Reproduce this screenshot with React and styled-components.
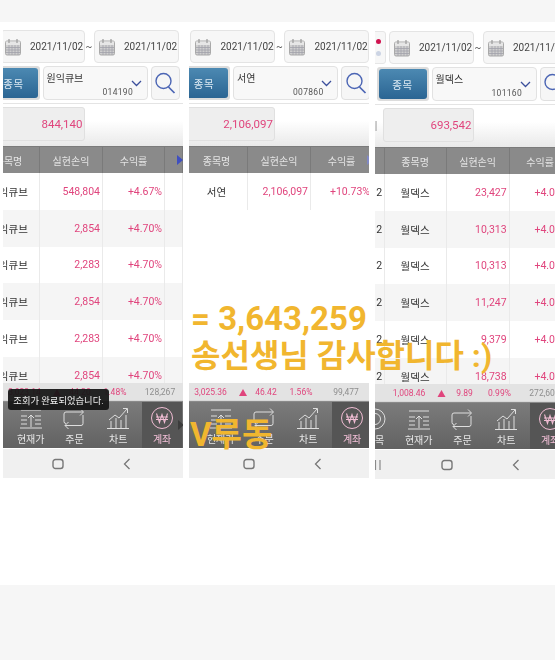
import React from "react";
import styled, { createGlobalStyle } from "styled-components";

const FONT = `"Roboto", "Noto Sans CJK KR", sans-serif`;
const GOLD = "#f1b62f";
const PINK = "#e0457d";

const Global = createGlobalStyle`
  html, body { margin: 0; padding: 0; background: #f6f6f6; }
  * { box-sizing: border-box; }
  body { font-family: ${FONT}; width: 555px; height: 660px; overflow: hidden; }
`;

const Page = styled.div`
  padding-top: 22px;
  height: 660px;
`;
const Sheet = styled.section`
  position: relative;
  height: 563px;
  background: #fff;
  display: flex;
  gap: 6px;
  padding-left: 3px;
  overflow: hidden;
`;
const Phone = styled.article`
  width: 180px;
  height: 456px;
  flex: none;
  margin-top: ${(p) => p.$drop}px;
  overflow: hidden;
  position: relative;
  display: flex;
  flex-direction: column;
  background: #fff;
  filter: blur(0.5px);
`;
const DateRow = styled.div`
  display: flex;
  align-items: center;
  height: 33px;
  margin: 8px 0 3px ${(p) => p.$offset - 32}px;
  flex: none;
`;
const DotCard = styled.div`
  width: 30px;
  height: 33px;
  margin-right: 3px;
  flex: none;
  border: 1px solid #e6e6e6;
  border-radius: 3px;
  background: #f7f7f7;
  display: flex;
  flex-direction: column;
  align-items: flex-end;
  justify-content: center;
  gap: 7px;
  padding-right: 4px;
`;
const Dot = styled.span`
  width: 5px;
  height: 5px;
  border-radius: 50%;
  background: ${(p) => p.$color};
`;
const DateBox = styled.div`
  width: 85px;
  height: 33px;
  flex: none;
  border: 1px solid #e4e4e4;
  border-radius: 4px;
  background: #f7f7f7;
  display: flex;
  align-items: center;
  padding-left: 3px;
  gap: 8.5px;
  font-size: 10px;
  color: #444;
  white-space: nowrap;
`;
const Tilde = styled.span`
  width: 9px;
  flex: none;
  text-align: center;
  font-size: 10px;
  color: #555;
`;
const StockRow = styled.div`
  display: flex;
  align-items: center;
  height: 34px;
  gap: 3px;
  margin-left: ${(p) => p.$offset - 11}px;
  flex: none;
`;
const StockFrame = styled.div`
  width: 52px;
  height: 34px;
  flex: none;
  background: #dcdcdc;
  border-radius: 3px;
  padding: 2px;
`;
const StockBtn = styled.div`
  height: 30px;
  border-radius: 3px;
  background: linear-gradient(#4c89b2, #2b6593);
  color: #dbe8f2;
  font-size: 10.5px;
  display: flex;
  align-items: center;
  justify-content: center;
  letter-spacing: 0.5px;
`;
const StockInput = styled.div`
  width: 105px;
  height: 34px;
  flex: none;
  position: relative;
  border: 1px solid #e2e2e2;
  border-radius: 4px;
  background: #f8f8f8;
  color: #333;
  font-size: 10px;
  padding: 3px 0 0 3px;
`;
const StockCode = styled.span`
  position: absolute;
  left: 59px;
  bottom: 2px;
  font-size: 8.5px;
  letter-spacing: 0.3px;
  color: #555;
`;
const Chevron = styled.svg`
  position: absolute;
  right: 5px;
  top: 13px;
`;
const SearchBtn = styled.div`
  width: 29px;
  height: 34px;
  flex: none;
  border: 1px solid #e0e0e0;
  border-radius: 4px;
  background: #f6f6f6;
  display: flex;
  align-items: center;
  justify-content: center;
`;
const SummaryBand = styled.div`
  height: 43px;
  flex: none;
  margin-top: 3px;
  border-top: 1px solid #e4e4e4;
  background: linear-gradient(#fff 40%, #e9e9e9);
  padding-top: 3px;
`;
const SummaryInner = styled.div`
  display: flex;
  align-items: center;
  margin-left: ${(p) => p.$offset - 65}px;
`;
const SummaryLabel = styled.span`
  width: 60px;
  flex: none;
  text-align: right;
  padding-right: 5px;
  font-size: 10px;
  color: #888;
`;
const SummaryBox = styled.div`
  width: 91px;
  height: 34px;
  flex: none;
  border: 1px solid #e0e0e0;
  border-radius: 3px;
  background: #eeeeee;
  color: ${PINK};
  font-size: 11.5px;
  display: flex;
  align-items: center;
  justify-content: flex-end;
  padding-right: 1px;
`;
const HeaderWrap = styled.div`
  position: relative;
  height: 27px;
  flex: none;
  overflow: hidden;
  background: #8a8a8a;
  border-top: 1px solid #7b7b7b;
`;
const Grid = styled.div`
  display: flex;
  height: 100%;
  margin-left: ${(p) => p.$scroll}px;
`;
const HeadCell = styled.div`
  width: ${(p) => p.$w}px;
  flex: none;
  border-right: 1px solid #7a7a7a;
  color: #e4e4e4;
  font-size: 10px;
  display: flex;
  align-items: center;
  justify-content: center;
  white-space: nowrap;
`;
const MoreArrow = styled.svg`
  position: absolute;
  top: 8px;
  left: ${(p) => p.$x}px;
`;
const TableBody = styled.div`
  height: 210px;
  flex: none;
  overflow: hidden;
`;
const Row = styled.div`
  height: 36.8px;
  background: ${(p) => (p.$shade ? "#f5f5f5" : "#fff")};
`;
const Cell = styled.div`
  width: ${(p) => p.$w}px;
  flex: none;
  height: 100%;
  border-right: 1px solid #eaeaea;
  font-size: 10.5px;
  color: ${(p) => (p.$pink ? PINK : "#333")};
  display: flex;
  align-items: center;
  justify-content: ${(p) => (p.$right ? "flex-end" : "center")};
  padding-right: ${(p) => (p.$right ? 2 : 0)}px;
  white-space: nowrap;
  overflow: hidden;
`;
const Status = styled.div`
  height: 18px;
  flex: none;
  background: #e3e3e3;
  display: flex;
  align-items: center;
  padding-left: ${(p) => p.$pad}px;
  font-size: 8.5px;
  color: ${PINK};
  border-bottom: 1px solid #d8d8d8;
  overflow: hidden;
`;
const StatusCol = styled.span`
  width: ${(p) => p.$w}px;
  flex: none;
  text-align: center;
  white-space: nowrap;
  color: ${(p) => (p.$grey ? "#8e8e8e" : PINK)};
`;
const Tabs = styled.nav`
  height: 47px;
  flex: none;
  background: linear-gradient(#7b7b7b, #626262);
  overflow: hidden;
  position: relative;
  border-top: 1px solid #8a8a8a;
`;
const TabStrip = styled.div`
  display: flex;
  height: 100%;
  margin-left: ${(p) => p.$left}px;
`;
const Tab = styled.div`
  width: 43.8px;
  flex: none;
  display: flex;
  flex-direction: column;
  align-items: center;
  justify-content: flex-end;
  gap: 1px;
  padding: 2px 0 2px;
  font-size: 10px;
  color: ${(p) => (p.$active ? "#f3c0d8" : "#e6e6e6")};
  background: ${(p) => (p.$active ? "linear-gradient(to right, transparent 2px, #555 2px, #555 42px, transparent 42px)" : "none")};
  white-space: nowrap;
`;
const TabArrow = styled.svg`
  position: absolute;
  left: 175px;
  top: 18px;
`;
const NavBar = styled.div`
  height: 30px;
  flex: none;
  margin-top: 1px;
  background: #f0f0f0;
  overflow: hidden;
`;
const NavStrip = styled.div`
  display: flex;
  height: 100%;
  margin-left: ${(p) => p.$offset - 44}px;
`;
const NavItem = styled.div`
  width: 69px;
  flex: none;
  display: flex;
  align-items: center;
  justify-content: center;
`;
const Toast = styled.div`
  position: absolute;
  left: 5px;
  top: 367px;
  width: 101px;
  height: 21px;
  background: rgba(20, 20, 20, 0.93);
  border-radius: 3px;
  color: #eee;
  font-size: 9.3px;
  display: flex;
  align-items: center;
  justify-content: center;
  white-space: nowrap;
`;
const Caption = styled.div`
  position: absolute;
  left: ${(p) => p.$x}px;
  top: ${(p) => p.$y}px;
  color: ${GOLD};
  font-size: ${(p) => p.$size}px;
  font-weight: 700;
  line-height: 1;
  white-space: nowrap;
`;

const CalendarIcon = () => (
  <svg width="18" height="18" viewBox="0 0 18 18">
    <rect x="1.5" y="3" width="15" height="14" rx="1.5" fill="#cfcfcf" stroke="#a9a9a9" />
    <rect x="2" y="3.5" width="14" height="3.5" fill="#e6e6e6" />
    <path d="M5 1v4M13 1v4" stroke="#9a9a9a" strokeWidth="1.2" />
    <path d="M2 9.5h14M2 12h14M2 14.5h14M5 7v10M8 7v10M11 7v10M14 7v10" stroke="#a2a2ab" strokeWidth="0.8" />
  </svg>
);
const SearchIcon = () => (
  <svg width="22" height="24" viewBox="0 0 22 24" fill="none" stroke="#4b65b4" strokeWidth="1.4">
    <circle cx="9.5" cy="10" r="7.5" />
    <path d="M14.5 16l6 6" strokeWidth="1.7" />
  </svg>
);
const stroke = { fill: "none", stroke: "#dedede", strokeWidth: 1 };
const TargetIcon = () => (
  <svg width="24" height="24" viewBox="0 0 24 24" {...stroke}>
    <circle cx="12" cy="12" r="10" />
    <circle cx="12" cy="12" r="5.5" />
  </svg>
);
const PriceIcon = () => (
  <svg width="24" height="24" viewBox="0 0 24 24" {...stroke}>
    <path d="M2 4h20M1 22h22M2 10h6M2 14h6M2 18h6M16 10h6M16 14h6M16 18h6M12 21V9M9 12l3-3 3 3" />
  </svg>
);
const OrderIcon = () => (
  <svg width="24" height="24" viewBox="0 0 24 24" {...stroke}>
    <path d="M4 17.500a2 2 0 0 1-2-2V8a2 2 0 0 1 2-2h17M18 2.500l3.500 3.500L18 9.500M21 9v8.500a2 2 0 0 1-2 2H3M6.500 16L3 19.500 6.500 23" />
  </svg>
);
const ChartIcon = () => (
  <svg width="24" height="24" viewBox="0 0 24 24" {...stroke}>
    <path d="M1 22.500h22M5 22v-7M10 22V12M15 22v-8M20 22V9M3 14l6-5 4 3 8-9M17 2.500h4.500V7" />
  </svg>
);
const WonIcon = () => (
  <svg width="24" height="24" viewBox="0 0 24 24" fill="none" stroke="#f0bcd3" strokeWidth="1">
    <circle cx="12" cy="12" r="10.500" />
    <path d="M6.500 7.500l3 9 2.500-8 2.500 8 3-9M6 11h12M6 13.500h12" strokeWidth="1.100" />
  </svg>
);

const TABS = [
  ["종목", <TargetIcon key="t" />],
  ["현재가", <PriceIcon key="p" />],
  ["주문", <OrderIcon key="o" />],
  ["차트", <ChartIcon key="c" />],
  ["계좌", <WonIcon key="w" />],
];
const STATUS_W = [43, 22, 24, 46, 44];

const PHONES = [
  {
    offset: -4.5, drop: 0, tabLeft: -38, scroll: -25, arrow: 174, arrowColor: "#3f4fc0", name: "원익큐브", code: "014190",
    total: "844,140", status: ["3,023.14", "44.20", "1.48%", "128,267"], toast: true, extra: 18,
    rows: [["원익큐브", "548,804", "+4.67%"], ["원익큐브", "2,854", "+4.70%"], ["원익큐브", "2,283", "+4.70%"], ["원익큐브", "2,854", "+4.70%"], ["원익큐브", "2,283", "+4.70%"], ["원익큐브", "2,854", "+4.70%"]],
  },
  {
    offset: 0, drop: 0, tabLeft: -34, scroll: -3, arrow: 178, arrowColor: "#8088c4", name: "서연", code: "007860",
    total: "2,106,097", status: ["3,025.36", "46.42", "1.56%", "99,477"], extra: 10,
    rows: [["서연", "2,106,097", "+10.73%"]],
  },
  {
    offset: 12.5, drop: 1, tabLeft: -22, scroll: 0, name: "월덱스", code: "101160", rank: 9.6,
    total: "693,542", status: ["1,008.46", "9.89", "0.99%", "272,607"], extra: 0, dots: true, label: "합계",
    rows: [["월덱스", "23,427", "+4.03%"], ["월덱스", "10,313", "+4.03%"], ["월덱스", "10,313", "+4.03%"], ["월덱스", "11,247", "+4.03%"], ["월덱스", "9,379", "+4.03%"], ["월덱스", "18,738", "+4.03%"]],
  },
];

function PhonePanel({ data }) {
  const { offset, drop, tabLeft, scroll, arrow, arrowColor, name, code, total, status, rows, rank, toast, extra, dots, label } = data;
  return (
    <Phone $drop={drop}>
      <DateRow $offset={offset}>
        <DotCard>
          {dots && <Dot $color="#d0134f" />}
          {dots && <Dot $color="#ccd4e4" />}
        </DotCard>
        <DateBox><CalendarIcon />2021/11/02</DateBox>
        <Tilde>~</Tilde>
        <DateBox><CalendarIcon />2021/11/02</DateBox>
      </DateRow>
      <StockRow $offset={offset}>
        <StockFrame><StockBtn>종목</StockBtn></StockFrame>
        <StockInput>
          {name}
          <StockCode>{code}</StockCode>
          <Chevron width="11" height="7" viewBox="0 0 11 7" fill="none" stroke="#3b4f9c" strokeWidth="1.3">
            <path d="M1 1l4.500 4.500L10 1" />
          </Chevron>
        </StockInput>
        <SearchBtn><SearchIcon /></SearchBtn>
      </StockRow>
      <SummaryBand>
        <SummaryInner $offset={offset}>
          <SummaryLabel>{label}</SummaryLabel>
          <SummaryBox>{total}</SummaryBox>
        </SummaryInner>
      </SummaryBand>
      <HeaderWrap>
        <Grid $scroll={scroll}>
          {rank && <HeadCell $w={rank} />}
          <HeadCell $w={62}>종목명</HeadCell>
          <HeadCell $w={63}>실현손익</HeadCell>
          <HeadCell $w={62}>수익률</HeadCell>
          {extra > 0 && <HeadCell $w={extra} />}
        </Grid>
        {arrow && (
          <MoreArrow $x={arrow} width="6" height="10" viewBox="0 0 6 10">
            <path d="M0 0l6 5-6 5z" fill={arrowColor} />
          </MoreArrow>
        )}
      </HeaderWrap>
      <TableBody>
        {rows.map((r, i) => (
          <Row key={i} $shade={i % 2 === 1}>
            <Grid $scroll={scroll}>
              {rank && <Cell $w={rank}>2</Cell>}
              <Cell $w={62}>{r[0]}</Cell>
              <Cell $w={63} $pink $right>{r[1]}</Cell>
              <Cell $w={62} $pink $right>{r[2]}</Cell>
              {extra > 0 && <Cell $w={extra} />}
            </Grid>
          </Row>
        ))}
      </TableBody>
      <Status $pad={offset}>
        <StatusCol $w={STATUS_W[0]}>{status[0]}</StatusCol>
        <StatusCol $w={STATUS_W[1]}>▲</StatusCol>
        <StatusCol $w={STATUS_W[2]}>{status[1]}</StatusCol>
        <StatusCol $w={STATUS_W[3]}>{status[2]}</StatusCol>
        <StatusCol $w={STATUS_W[4]} $grey>{status[3]}</StatusCol>
      </Status>
      <Tabs>
        <TabStrip $left={tabLeft}>
          {TABS.map(([t, icon], i) => (
            <Tab key={t} $active={i === 4}>
              {icon}
              {t}
            </Tab>
          ))}
        </TabStrip>
        {toast && (
          <TabArrow width="6" height="10" viewBox="0 0 6 10"><path d="M0 0l6 5-6 5z" fill="#3c3c3c" /></TabArrow>
        )}
      </Tabs>
      <NavBar>
        <NavStrip $offset={offset}>
          <NavItem>
            <svg width="8" height="10" viewBox="0 0 8 10" stroke="#8a8a8a" strokeWidth="1.200"><path d="M1.500 0v10M6 0v10" /></svg>
          </NavItem>
          <NavItem>
            <svg width="12" height="12" viewBox="0 0 12 12" fill="none" stroke="#777" strokeWidth="1.400"><rect x="1" y="1.500" width="10" height="9" rx="2.500" /></svg>
          </NavItem>
          <NavItem>
            <svg width="8" height="12" viewBox="0 0 8 12" fill="none" stroke="#777" strokeWidth="1.300"><path d="M6.500 1L1.500 6l5 5" /></svg>
          </NavItem>
        </NavStrip>
      </NavBar>
      {toast && <Toast>조회가 완료되었습니다.</Toast>}
    </Phone>
  );
}

export default function App() {
  return (
    <Page>
      <Global />
      <Sheet>
        {PHONES.map((p) => <PhonePanel key={p.code} data={p} />)}
        <Caption $x={191} $y={280} $size={33}>= 3,643,259</Caption>
        <Caption $x={191} $y={318} $size={32}>송선생님 감사합니다 :)</Caption>
        <Caption $x={190} $y={396} $size={33}>V루동</Caption>
      </Sheet>
    </Page>
  );
}
